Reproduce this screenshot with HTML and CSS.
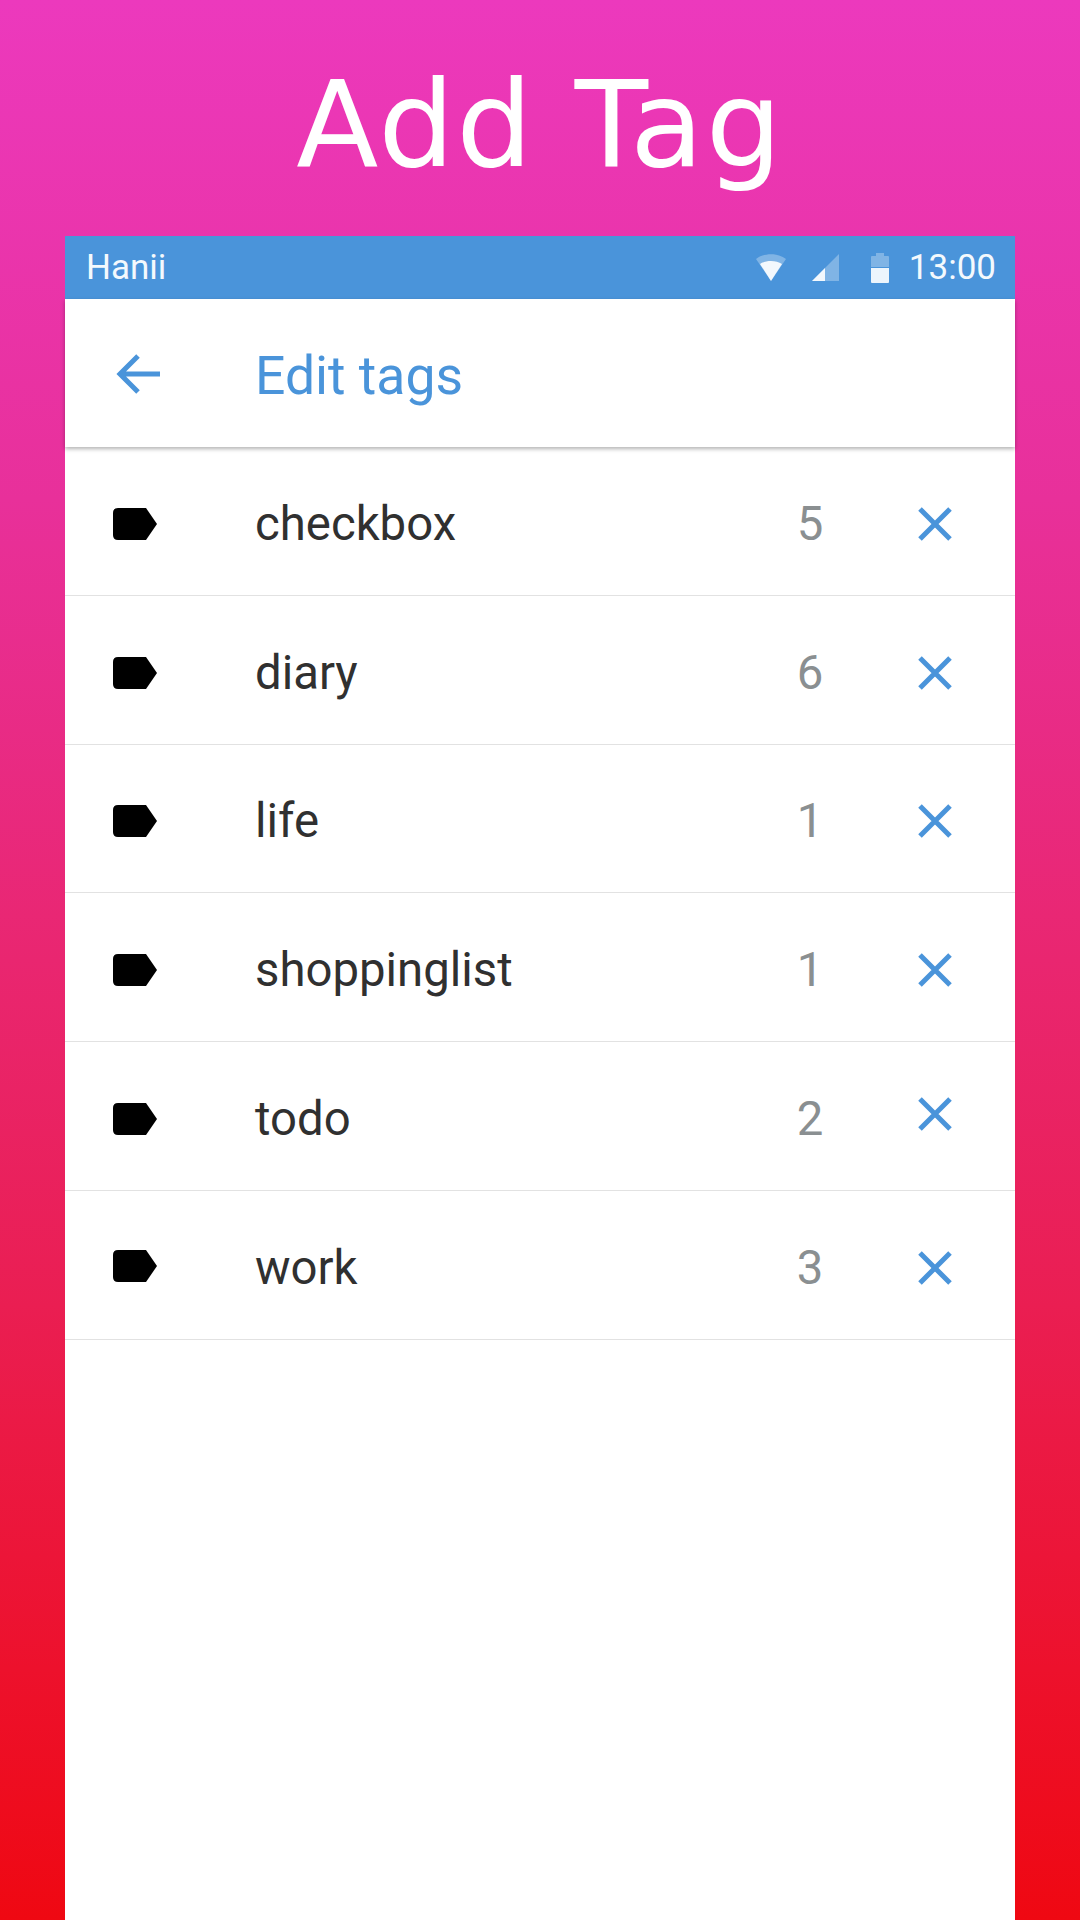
FILE: index.html
```html
<!DOCTYPE html>
<html lang="en">
<head>
    <meta charset="UTF-8">
    <meta name="viewport" content="width=device-width, initial-scale=1.0">
    <title>Add Tag</title>
    <link rel="stylesheet" href="styles.css">
</head>
<body>

<h1 class="promo-title">Add Tag</h1>

<div class="phone">
    <div class="status-bar">
        <span class="carrier">Hanii</span>
        <div class="status-icons">
            <svg class="wifi-icon" width="30" height="28" viewBox="0 0 30 28">
                <path d="M0 5 C8 -1.500 22 -1.500 30 5 L15 27 Z" fill="#fff" fill-opacity="0.3"/>
                <path d="M4 10 C10 6 20 6 26 10 L15 27 Z" fill="#fff" fill-opacity="0.9"/>
            </svg>
            <svg class="signal-icon" width="27" height="27" viewBox="0 0 27 27">
                <path d="M0 27 L27 0 V27 Z" fill="#fff" fill-opacity="0.3"/>
                <path d="M0 27 L13 14 V27 Z" fill="#fff" fill-opacity="0.9"/>
            </svg>
            <svg class="battery-icon" width="18" height="30" viewBox="0 0 18 30">
                <path d="M5 0 H13 V3 H17 Q18 3 18 4 V14 H0 V4 Q0 3 1 3 H5 Z" fill="#fff" fill-opacity="0.3"/>
                <path d="M0 15 H18 V29 Q18 30 17 30 H1 Q0 30 0 29 Z" fill="#fff" fill-opacity="0.9"/>
            </svg>
            <span class="clock">13:00</span>
        </div>
    </div>

    <div class="app-bar">
        <svg class="back-icon" width="46" height="42" viewBox="0 0 46 42">
            <path d="M44 21 H4 M22 3 L4 21 L22 39" fill="none" stroke="#4a94da" stroke-width="5"/>
        </svg>
        <span class="app-title">Edit tags</span>
    </div>

    <div class="tag-list">
        <div class="tag-row">
            <svg class="tag-icon" width="46" height="34" viewBox="0 0 46 34"><path d="M6 1 H34 L45 17 L34 33 H6 Q1 33 1 28 V6 Q1 1 6 1 Z"/></svg>
            <span class="tag-name">checkbox</span>
            <span class="tag-count">5</span>
            <svg class="remove-icon" width="34" height="34" viewBox="0 0 34 34"><path d="M2 2 L32 32 M32 2 L2 32"/></svg>
        </div>
        <div class="tag-row">
            <svg class="tag-icon" width="46" height="34" viewBox="0 0 46 34"><path d="M6 1 H34 L45 17 L34 33 H6 Q1 33 1 28 V6 Q1 1 6 1 Z"/></svg>
            <span class="tag-name">diary</span>
            <span class="tag-count">6</span>
            <svg class="remove-icon" width="34" height="34" viewBox="0 0 34 34"><path d="M2 2 L32 32 M32 2 L2 32"/></svg>
        </div>
        <div class="tag-row">
            <svg class="tag-icon" width="46" height="34" viewBox="0 0 46 34"><path d="M6 1 H34 L45 17 L34 33 H6 Q1 33 1 28 V6 Q1 1 6 1 Z"/></svg>
            <span class="tag-name">life</span>
            <span class="tag-count">1</span>
            <svg class="remove-icon" width="34" height="34" viewBox="0 0 34 34"><path d="M2 2 L32 32 M32 2 L2 32"/></svg>
        </div>
        <div class="tag-row">
            <svg class="tag-icon" width="46" height="34" viewBox="0 0 46 34"><path d="M6 1 H34 L45 17 L34 33 H6 Q1 33 1 28 V6 Q1 1 6 1 Z"/></svg>
            <span class="tag-name">shoppinglist</span>
            <span class="tag-count">1</span>
            <svg class="remove-icon" width="34" height="34" viewBox="0 0 34 34"><path d="M2 2 L32 32 M32 2 L2 32"/></svg>
        </div>
        <div class="tag-row">
            <svg class="tag-icon" width="46" height="34" viewBox="0 0 46 34"><path d="M6 1 H34 L45 17 L34 33 H6 Q1 33 1 28 V6 Q1 1 6 1 Z"/></svg>
            <span class="tag-name">todo</span>
            <span class="tag-count">2</span>
            <svg class="remove-icon raised" width="34" height="34" viewBox="0 0 34 34"><path d="M2 2 L32 32 M32 2 L2 32"/></svg>
        </div>
        <div class="tag-row">
            <svg class="tag-icon raised" width="46" height="34" viewBox="0 0 46 34"><path d="M6 1 H34 L45 17 L34 33 H6 Q1 33 1 28 V6 Q1 1 6 1 Z"/></svg>
            <span class="tag-name">work</span>
            <span class="tag-count">3</span>
            <svg class="remove-icon" width="34" height="34" viewBox="0 0 34 34"><path d="M2 2 L32 32 M32 2 L2 32"/></svg>
        </div>
    </div>
</div>

</body>
</html>
```

FILE: styles.css
```css
html, body {
    height: 100%;
}
body {
    margin: 0;
    width: 1080px;
    height: 1920px;
    overflow: hidden;
    display: flex;
    flex-direction: column;
    background: linear-gradient(180deg, #ec39bd 0%, #e8309a 26%, #e92670 50%, #ea1e52 68%, #ef0812 100%);
    font-family: Roboto, "Liberation Sans", sans-serif;
}
.promo-title {
    margin: 0;
    height: 236px;
    flex: none;
    display: flex;
    justify-content: center;
    align-items: center;
    padding-top: 12px;
    box-sizing: border-box;
    color: #ffffff;
    font-family: "DejaVu Sans", sans-serif;
    font-size: 120px;
    font-weight: normal;
    letter-spacing: 2px;
}
.phone {
    flex: 1;
    margin: 0 65px;
    background-color: #ffffff;
    display: flex;
    flex-direction: column;
}
.status-bar {
    height: 63px;
    flex: none;
    display: flex;
    justify-content: space-between;
    align-items: center;
    padding: 0 19px 0 21px;
    background-color: #4a94da;
    color: #f4f9fd;
    font-size: 35px;
}
.status-icons {
    display: flex;
    align-items: center;
}
.wifi-icon {
    margin-right: 26px;
}
.signal-icon {
    margin-right: 32px;
}
.battery-icon {
    margin-right: 20px;
}
.app-bar {
    height: 148px;
    flex: none;
    display: flex;
    align-items: center;
    box-sizing: border-box;
    padding: 2px 0 0 51px;
    position: relative;
    box-shadow: 0 2px 4px rgba(0, 0, 0, 0.3);
}
.app-title {
    margin-left: 93px;
    padding-top: 2px;
    color: #4a94da;
    font-size: 53.500px;
}
.tag-row {
    height: 148.8px;
    box-sizing: border-box;
    display: flex;
    align-items: center;
    padding: 6px 0 0 47px;
    border-bottom: 1px solid #e2e2e2;
}
.tag-icon {
    flex: none;
    fill: #000000;
}
.tag-name {
    flex: 1;
    margin-left: 97px;
    color: #303030;
    font-size: 47.300px;
}
.tag-count {
    width: 40px;
    margin-right: 88px;
    text-align: center;
    color: #8a8f91;
    font-size: 47.300px;
}
.remove-icon {
    flex: none;
    margin-right: 63px;
    fill: none;
    stroke: #4a94da;
    stroke-width: 5;
}
.remove-icon.raised {
    margin-bottom: 10px;
}
.tag-icon.raised {
    margin-bottom: 4px;
}
```
